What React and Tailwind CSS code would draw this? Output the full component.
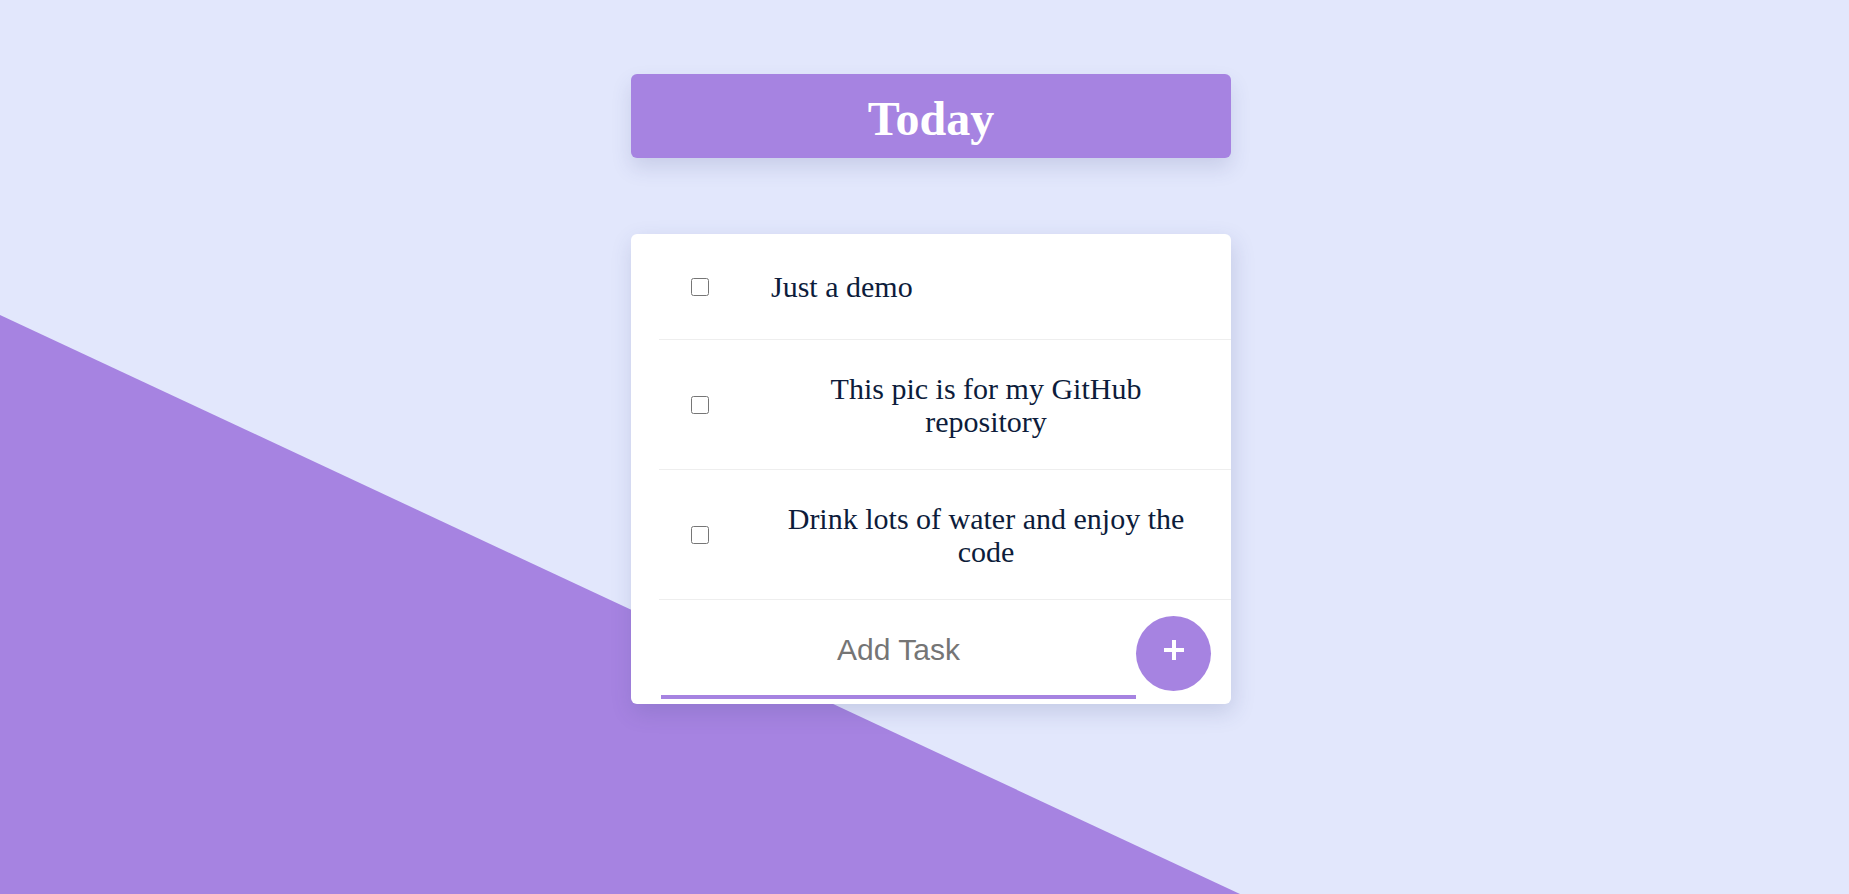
import React, { useState } from 'react'

const initialTasks = [
  { id: 1, text: 'Just a demo', done: false },
  { id: 2, text: 'This pic is for my GitHub repository', done: false },
  { id: 3, text: 'Drink lots of water and enjoy the code', done: false },
]

const TaskRow = ({ task, onToggle }) => (
  <li className="flex items-center min-h-[106px] py-[31.5px] border-b border-[#eeeeee]">
    <input
      type="checkbox"
      checked={task.done}
      onChange={() => onToggle(task.id)}
      className="ml-[32px] w-[18px] h-[18px] shrink-0"
    />
    <p className="ml-[62px] max-w-[430px] text-center text-[30px] leading-[33px] text-[#0d1c3b] font-['Liberation_Serif',serif]">
      {task.text}
    </p>
  </li>
)

const App = () => {
  const [tasks, setTasks] = useState(initialTasks)
  const [newTask, setNewTask] = useState('')

  const toggleTask = (id) => {
    setTasks(tasks.map((t) => (t.id === id ? { ...t, done: !t.done } : t)))
  }

  const addTask = () => {
    if (!newTask.trim()) return
    setTasks([...tasks, { id: Date.now(), text: newTask, done: false }])
    setNewTask('')
  }

  return (
    <div className="relative h-screen w-full overflow-hidden bg-[#e2e7fc]">
      {/* diagonal background */}
      <div className="absolute inset-0 bg-[#a683e1] [clip-path:polygon(0_315px,1240px_100%,0_100%)]" />

      <div className="relative z-10 flex flex-col items-center pl-[13px]">
        {/* Header */}
        <div className="mt-[74px] w-[600px] h-[84px] pt-[5px] flex items-center justify-center rounded-[6px] bg-[#a683e1] shadow-[0_10px_20px_rgba(60,70,130,0.15)]">
          <h1 className="text-white font-bold text-[48px] leading-none font-['Liberation_Serif',serif]">Today</h1>
        </div>

        {/* Task card */}
        <div className="mt-[76px] w-[600px] bg-white rounded-[6px] shadow-[2px_8px_22px_rgba(60,70,130,0.18)]">
          <ul className="ml-[28px]">
            {tasks.map((task) => (
              <TaskRow key={task.id} task={task} onToggle={toggleTask} />
            ))}
          </ul>

          {/* Add task */}
          <div className="flex items-center ml-[30px] mr-[20px] pt-[8px] pb-[5px]">
            <input
              type="text"
              value={newTask}
              onChange={(e) => setNewTask(e.target.value)}
              placeholder="Add Task"
              className="w-[475px] h-[91px] pb-[4px] text-center text-[30px] text-[#333] placeholder:text-[#757575] border-b-4 border-[#a683e1] outline-none font-['Liberation_Sans',sans-serif]"
            />
            <button
              onClick={addTask}
              className="w-[75px] h-[75px] shrink-0 rounded-full bg-[#a683e1] flex items-center justify-center"
            >
              <svg width="22" height="22" viewBox="0 0 22 22" className="-mt-[8px]">
                <path d="M11 1v20M1 11h20" stroke="white" strokeWidth="4" />
              </svg>
            </button>
          </div>
        </div>
      </div>
    </div>
  )
}

export default App
